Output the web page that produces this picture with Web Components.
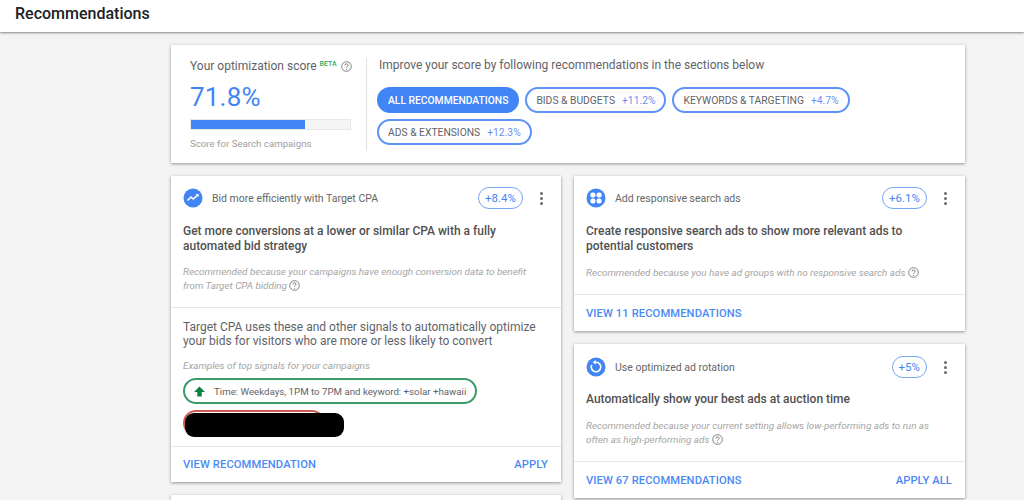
<!DOCTYPE html>
<html lang="en">
<head>
<meta charset="utf-8">
<title>Recommendations</title>
<style>
html, body { margin: 0; height: 500px; overflow: hidden; background: #f3f3f3; font-family: Roboto, "Liberation Sans", sans-serif; color: #5f6368; }
main { height: 468px; overflow: hidden; padding: 13px 0 0 171px; box-sizing: border-box; }
.page { width: 794px; }
.grid { display: grid; grid-template-columns: 390px 391px; column-gap: 13px; margin-top: 13px; }
.col { display: flex; flex-direction: column; gap: 13px; }
</style>
</head>
<body>

<template id="tpl-help">
  <style>
    :host { display: inline-block; width: 11px; height: 11px; vertical-align: -2px; }
    svg { display: block; }
  </style>
  <svg width="11" height="11" viewBox="0 0 24 24" fill="none" stroke="#757575" stroke-width="2">
    <circle cx="12" cy="12" r="10.5"/>
    <path d="M8.6 9.6a3.4 3.4 0 0 1 6.8 0c0 2.4-3.4 2.6-3.4 5.2"/>
    <circle cx="12" cy="18" r="1.3" fill="#757575" stroke="none"/>
  </svg>
</template>

<template id="tpl-header">
  <style>
    :host { display: flex; align-items: center; height: 32px; padding: 0 0 6px 15px; box-sizing: border-box; background: #fff; box-shadow: 0 1px 2px rgba(0,0,0,.45); color: #202124; font-size: 16px; font-weight: 500; position: relative; }
  </style>
  <slot></slot>
</template>

<template id="tpl-chip">
  <style>
    :host { display: inline-flex; align-items: center; gap: 7px; height: 26px; padding: 0 9px; box-sizing: border-box; border: 2px solid #5b94f5; border-radius: 13px; background: #fff; color: #5f6368; font-size: 10.3px; white-space: nowrap; }
    :host([active]) { background: #4285f4; border-color: #4285f4; color: #fff; font-weight: 500; }
    :host([active]) .v { display: none; }
    .v { color: #6f8ff0; }
  </style>
  <slot></slot><span class="v"><slot name="value"></slot></span>
</template>

<template id="tpl-score">
  <style>
    :host { display: flex; background: #fff; box-shadow: 0 1px 3px rgba(0,0,0,.4); height: 118px; box-sizing: border-box; padding: 13px 0 12px 19px; }
    .left { width: 166px; padding-top: 1px; border-right: 1px solid #e0e0e0; padding-right: 10px; margin-right: 9px; flex: none; }
    .title { font-size: 12px; color: #5f6368; line-height: 15px; display: flex; align-items: center; white-space: nowrap; }
    sup { font-size: 7px; font-weight: 500; color: #2aa86a; margin: -6px 4px 0 3px; line-height: 8px; }
    .num { font-size: 26px; color: #4285f4; line-height: 30px; margin-top: 8px; letter-spacing: .2px; }
    .bar { height: 11px; width: 161px; box-sizing: border-box; background: #f5f5f5; border: 1px solid #e8e8e8; margin-top: 7px; }
    .bar div { height: 100%; width: 71.4%; background: #4285f4; }
    .sub { font-size: 9.7px; color: #9e9e9e; margin-top: 8px; line-height: 12px; }
    .lead { font-size: 12px; color: #5f6368; line-height: 15px; margin-left: 3px; }
    .chips { display: flex; flex-wrap: wrap; gap: 6px; margin: 14px 0 0 1px; width: 500px; }
  </style>
  <div class="left">
    <div class="title">Your optimization score<sup>BETA</sup><help-icon></help-icon></div>
    <div class="num"><slot name="score"></slot></div>
    <div class="bar"><div></div></div>
    <div class="sub">Score for Search campaigns</div>
  </div>
  <div>
    <div class="lead"><slot name="lead"></slot></div>
    <div class="chips"><slot></slot></div>
  </div>
</template>

<template id="tpl-card">
  <style>
    :host { display: block; background: #fff; box-shadow: 0 1px 3px rgba(0,0,0,.4); }
    .head { display: flex; align-items: center; height: 22px; padding: var(--head-top, 11px) 12px 0 12px; }
    .name { flex: 1; font-size: 10.5px; color: #666; margin-left: 9px; }
    .badge { height: 22px; padding: 0 6px; box-sizing: border-box; display: flex; align-items: center; border: 1px solid #76a5f5; border-radius: 11px; color: #4285f4; font-size: 11.5px; }
    .more { width: 3px; margin: 0 6px 0 17px; display: flex; flex-direction: column; gap: 2px; }
    .more i { width: 3px; height: 3px; border-radius: 50%; background: #6a6a6a; }
    .headline { font-size: 12px; font-weight: 500; line-height: 15px; color: #505050; padding: var(--headline-top, 15px) 40px 0 12px; }
    .reason { font-size: 9.9px; font-style: italic; line-height: 14px; color: #a5a5a5; padding: var(--reason-top, 12px) 30px 0 12px; }
    .foot { display: flex; justify-content: space-between; align-items: center; height: 36px; padding: 0 13px 0 12px; border-top: 1px solid #e6e6e6; margin-top: 14px; color: #4a8af4; font-size: 11.2px; font-weight: 500; letter-spacing: .1px; }
    :host([tall]) .foot { margin-top: 0; height: 35px; }
  </style>
  <div class="head">
    <slot name="icon"></slot>
    <div class="name"><slot name="name"></slot></div>
    <div class="badge"><slot name="badge"></slot></div>
    <div class="more"><i></i><i></i><i></i></div>
  </div>
  <div class="headline"><slot name="headline"></slot></div>
  <div class="reason"><slot name="reason"></slot></div>
  <slot name="extra"></slot>
  <div class="foot"><slot name="primary"></slot><slot name="secondary"></slot></div>
</template>

<template id="tpl-signals">
  <style>
    :host { display: block; border-top: 1px solid #e6e6e6; margin-top: 14px; padding: 12px 12px 0; height: 139px; box-sizing: border-box; }
    .body { font-size: 12px; line-height: 14px; color: #5f6368; }
    .ex { font-size: 9.9px; font-style: italic; color: #a5a5a5; margin-top: 11px; line-height: 14px; }
    .pill { display: inline-flex; align-items: center; gap: 9px; height: 26px; box-sizing: border-box; padding: 0 9px; border: 2px solid #3a9a6a; border-radius: 13px; font-size: 9.7px; color: #5f6368; margin-top: 5px; white-space: nowrap; vertical-align: top; }
    .wrap { position: relative; height: 26px; margin-top: 6px; }
    .red { width: 142px; height: 26px; box-sizing: border-box; border: 2px solid #cf5b50; border-radius: 13px; }
    .black { position: absolute; left: 2px; top: 3px; width: 159px; height: 24px; border-radius: 9px; background: #000; }
  </style>
  <div class="body"><slot></slot></div>
  <div class="ex"><slot name="examples"></slot></div>
  <div class="pill">
    <svg width="11" height="11" viewBox="0 0 11 11"><path d="M5.5 .5 11 6H7.7v4.5H3.3V6H0z" fill="#0b8043"/></svg>
    <span><slot name="signal"></slot></span>
  </div>
  <div class="wrap"><div class="red"></div><div class="black"></div></div>
</template>

<template id="tpl-icon">
  <style>
    :host { display: block; width: 20px; height: 20px; flex: none; }
    svg { display: block; }
  </style>
  <svg width="20" height="20" viewBox="0 0 20 20"><circle cx="10" cy="10" r="9.5" fill="#4285f4"/><g id="g"></g></svg>
</template>

<app-header>Recommendations</app-header>

<main>
  <div class="page">
    <score-card>
      <span slot="score">71.8%</span>
      <span slot="lead">Improve your score by following recommendations in the sections below</span>
      <filter-chip active>ALL RECOMMENDATIONS</filter-chip>
      <filter-chip>BIDS &amp; BUDGETS<span slot="value">+11.2%</span></filter-chip>
      <filter-chip>KEYWORDS &amp; TARGETING<span slot="value">+4.7%</span></filter-chip>
      <filter-chip>ADS &amp; EXTENSIONS<span slot="value">+12.3%</span></filter-chip>
    </score-card>

    <div class="grid">
      <div class="col">
        <rec-card tall style="--reason-top:11px">
          <card-icon slot="icon" kind="trend"></card-icon>
          <span slot="name">Bid more efficiently with Target CPA</span>
          <span slot="badge">+8.4%</span>
          <span slot="headline">Get more conversions at a lower or similar CPA with a fully automated bid strategy</span>
          <span slot="reason">Recommended because your campaigns have enough conversion data to benefit from Target CPA bidding <help-icon></help-icon></span>
          <signal-panel slot="extra">
            Target CPA uses these and other signals to automatically optimize your bids for visitors who are more or less likely to convert
            <span slot="examples">Examples of top signals for your campaigns</span>
            <span slot="signal">Time: Weekdays, 1PM to 7PM and keyword: +solar +hawaii</span>
          </signal-panel>
          <span slot="primary">VIEW RECOMMENDATION</span>
          <span slot="secondary">APPLY</span>
        </rec-card>
        <rec-card></rec-card>
      </div>
      <div class="col">
        <rec-card>
          <card-icon slot="icon" kind="grid"></card-icon>
          <span slot="name">Add responsive search ads</span>
          <span slot="badge">+6.1%</span>
          <span slot="headline">Create responsive search ads to show more relevant ads to potential customers</span>
          <span slot="reason">Recommended because you have ad groups with no responsive search ads <help-icon></help-icon></span>
          <span slot="primary">VIEW 11 RECOMMENDATIONS</span>
        </rec-card>
        <rec-card style="--head-top:12px;--headline-top:14px">
          <card-icon slot="icon" kind="rotate"></card-icon>
          <span slot="name">Use optimized ad rotation</span>
          <span slot="badge">+5%</span>
          <span slot="headline">Automatically show your best ads at auction time</span>
          <span slot="reason">Recommended because your current setting allows low-performing ads to run as often as high-performing ads <help-icon></help-icon></span>
          <span slot="primary">VIEW 67 RECOMMENDATIONS</span>
          <span slot="secondary">APPLY ALL</span>
        </rec-card>
      </div>
    </div>
  </div>
</main>

<script>
function fromTemplate(id) {
  return class extends HTMLElement {
    constructor() {
      super();
      this.attachShadow({ mode: 'open' }).appendChild(document.getElementById(id).content.cloneNode(true));
    }
  };
}

customElements.define('help-icon', fromTemplate('tpl-help'));
customElements.define('app-header', fromTemplate('tpl-header'));
customElements.define('filter-chip', fromTemplate('tpl-chip'));
customElements.define('score-card', fromTemplate('tpl-score'));
customElements.define('rec-card', fromTemplate('tpl-card'));
customElements.define('signal-panel', fromTemplate('tpl-signals'));

const ICON_GLYPHS = {
  trend: '<path d="M4.5 12.5 8 9l2.2 2L15 6.8" fill="none" stroke="#fff" stroke-width="1.6"/><path d="M12.6 6h3v3z" fill="#fff"/>',
  grid: '<g fill="#fff"><rect x="4.4" y="4.4" width="5" height="5" rx="2"/><rect x="10.6" y="4.4" width="5" height="5" rx="2"/><rect x="4.4" y="10.6" width="5" height="5" rx="2"/><rect x="10.6" y="10.6" width="5" height="5" rx="2"/></g>',
  rotate: '<path d="M10 5.2a4.8 4.8 0 1 1-4.3 2.7" fill="none" stroke="#fff" stroke-width="1.6"/><path d="M9.8 3v4.6L6.6 5.3z" fill="#fff"/>'
};

class CardIcon extends fromTemplate('tpl-icon') {
  connectedCallback() {
    this.shadowRoot.getElementById('g').innerHTML = ICON_GLYPHS[this.getAttribute('kind')];
  }
}
customElements.define('card-icon', CardIcon);
</script>
</body>
</html>
